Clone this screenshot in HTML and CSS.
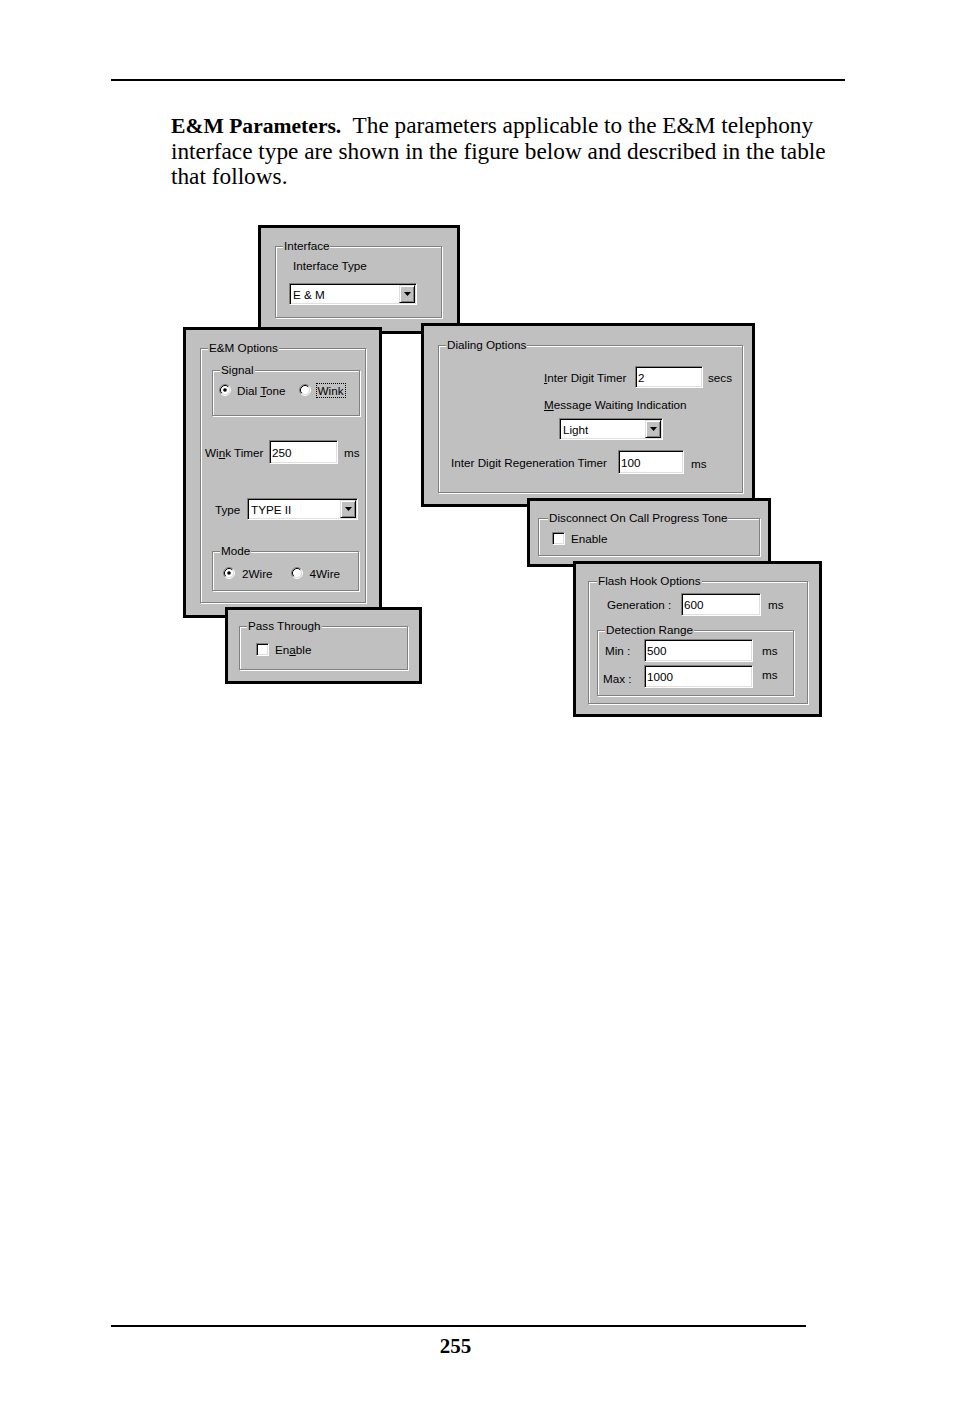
FILE: index.html
```html
<!DOCTYPE html>
<html lang="en">
<head>
<meta charset="utf-8">
<title>E&amp;M Parameters</title>
<link rel="stylesheet" href="styles.css">
</head>
<body>
<div class="page">
  <div class="rule rule-top"></div>
  <p class="intro"><b class="lead">E&amp;M Parameters.</b>&nbsp; The parameters applicable to the E&amp;M telephony interface type are shown in the figure below and described in the table that follows.</p>

  <div class="figure">
    <!-- Interface -->
    <section class="panel p-interface">
      <div class="group">
        <span class="legend">Interface</span>
        <div class="if-label">Interface Type</div>
        <div class="select if-select"><span class="sel-text">E &amp; M</span><span class="drop"><svg width="7" height="4" viewBox="0 0 7 4"><path d="M0 0H7L3.5 4Z" fill="#000"/></svg></span></div>
      </div>
    </section>

    <!-- E&M Options -->
    <section class="panel p-em">
      <div class="group">
        <span class="legend">E&amp;M Options</span>
        <div class="group sub g-signal">
          <span class="legend">Signal</span>
          <div class="opts sig-opts">
            <span class="opt"><svg class="radio" width="12" height="12" viewBox="0 0 12 12"><circle cx="6" cy="6" r="4.5" fill="#fff"/><path d="M2.11 9.89A5.5 5.5 0 0 1 9.89 2.11" fill="none" stroke="#808080"/><path d="M9.89 2.11A5.5 5.5 0 0 1 2.11 9.89" fill="none" stroke="#fff"/><path d="M2.82 9.18A4.5 4.5 0 0 1 9.18 2.82" fill="none" stroke="#000"/><path d="M9.18 2.82A4.5 4.5 0 0 1 2.82 9.18" fill="none" stroke="#dfdfdf"/><circle cx="6" cy="6" r="1.8" fill="#000"/></svg><span>Dial <u>T</u>one</span></span>
            <span class="opt opt-wink"><svg class="radio" width="12" height="12" viewBox="0 0 12 12"><circle cx="6" cy="6" r="4.5" fill="#fff"/><path d="M2.11 9.89A5.5 5.5 0 0 1 9.89 2.11" fill="none" stroke="#808080"/><path d="M9.89 2.11A5.5 5.5 0 0 1 2.11 9.89" fill="none" stroke="#fff"/><path d="M2.82 9.18A4.5 4.5 0 0 1 9.18 2.82" fill="none" stroke="#000"/><path d="M9.18 2.82A4.5 4.5 0 0 1 2.82 9.18" fill="none" stroke="#dfdfdf"/></svg><span class="focus">Wink</span></span>
          </div>
        </div>
        <div class="row wink-row">
          <span class="lbl lbl-wink">Wi<u>n</u>k Timer</span>
          <span class="field w-wink">250</span>
          <span class="unit">ms</span>
        </div>
        <div class="row type-row">
          <span class="lbl lbl-type">Type</span>
          <div class="select w-type"><span class="sel-text">TYPE II</span><span class="drop"><svg width="7" height="4" viewBox="0 0 7 4"><path d="M0 0H7L3.5 4Z" fill="#000"/></svg></span></div>
        </div>
        <div class="group sub g-mode">
          <span class="legend">Mode</span>
          <div class="opts mode-opts">
            <span class="opt"><svg class="radio" width="12" height="12" viewBox="0 0 12 12"><circle cx="6" cy="6" r="4.5" fill="#fff"/><path d="M2.11 9.89A5.5 5.5 0 0 1 9.89 2.11" fill="none" stroke="#808080"/><path d="M9.89 2.11A5.5 5.5 0 0 1 2.11 9.89" fill="none" stroke="#fff"/><path d="M2.82 9.18A4.5 4.5 0 0 1 9.18 2.82" fill="none" stroke="#000"/><path d="M9.18 2.82A4.5 4.5 0 0 1 2.82 9.18" fill="none" stroke="#dfdfdf"/><circle cx="6" cy="6" r="1.8" fill="#000"/></svg><span>2Wire</span></span>
            <span class="opt opt-4wire"><svg class="radio" width="12" height="12" viewBox="0 0 12 12"><circle cx="6" cy="6" r="4.5" fill="#fff"/><path d="M2.11 9.89A5.5 5.5 0 0 1 9.89 2.11" fill="none" stroke="#808080"/><path d="M9.89 2.11A5.5 5.5 0 0 1 2.11 9.89" fill="none" stroke="#fff"/><path d="M2.82 9.18A4.5 4.5 0 0 1 9.18 2.82" fill="none" stroke="#000"/><path d="M9.18 2.82A4.5 4.5 0 0 1 2.82 9.18" fill="none" stroke="#dfdfdf"/></svg><span>4Wire</span></span>
          </div>
        </div>
      </div>
    </section>

    <!-- Pass Through -->
    <section class="panel p-pass">
      <div class="group">
        <span class="legend">Pass Through</span>
        <div class="row chk-row pass-chk"><span class="check"></span><span>En<u>a</u>ble</span></div>
      </div>
    </section>

    <!-- Dialing Options -->
    <section class="panel p-dial">
      <div class="group">
        <span class="legend">Dialing Options</span>
        <div class="row d-row1">
          <span class="lbl lbl-idt"><u>I</u>nter Digit Timer</span>
          <span class="field w-idt">2</span>
          <span class="unit unit-secs">secs</span>
        </div>
        <div class="d-row2"><u>M</u>essage Waiting Indication</div>
        <div class="select d-row3"><span class="sel-text">Light</span><span class="drop"><svg width="7" height="4" viewBox="0 0 7 4"><path d="M0 0H7L3.5 4Z" fill="#000"/></svg></span></div>
        <div class="row d-row4">
          <span class="lbl lbl-regen">Inter Digit Regeneration Timer</span>
          <span class="field w-regen">100</span>
          <span class="unit unit-regen">ms</span>
        </div>
      </div>
    </section>

    <!-- Disconnect -->
    <section class="panel p-disc">
      <div class="group">
        <span class="legend legend-disc">Disconnect On Call Progress Tone</span>
        <div class="row chk-row disc-chk"><span class="check"></span><span>Enable</span></div>
      </div>
    </section>

    <!-- Flash Hook -->
    <section class="panel p-flash">
      <div class="group">
        <span class="legend legend-flash">Flash Hook Options</span>
        <div class="row f-gen">
          <span class="lbl lbl-gen">Generation :</span>
          <span class="field w-gen">600</span>
          <span class="unit unit-gen">ms</span>
        </div>
        <div class="group sub g-detect">
          <span class="legend">Detection Range</span>
          <div class="row f-min">
            <span class="lbl lbl-min">Min :</span>
            <span class="field w-range">500</span>
            <span class="unit unit-range">ms</span>
          </div>
          <div class="row f-max">
            <span class="lbl lbl-max">Max :</span>
            <span class="field w-range">1000</span>
            <span class="unit unit-range unit-up">ms</span>
          </div>
        </div>
      </div>
    </section>
  </div>

  <footer class="footer">
    <div class="rule rule-bottom"></div>
    <div class="page-num">255</div>
  </footer>
</div>
</body>
</html>
```
FILE: styles.css
```css
* { box-sizing: border-box; }

body {
  margin: 0;
  background: #fff;
  color: #000;
  font-family: "Liberation Sans", Arial, sans-serif;
}

.page {
  width: 954px;
  height: 1409px;
  display: flex;
  flex-direction: column;
  overflow: hidden;
}

.rule { height: 2px; background: #000; }
.rule-top { margin: 79px 0 0 111px; width: 734px; }

.intro {
  margin: 32px 0 0 171px;
  width: 665px;
  height: 76.5px;
  font-family: "Liberation Serif", "Times New Roman", serif;
  font-size: 23.3px;
  line-height: 25.5px;
  flex: none;
}
.lead { font-size: 21.6px; line-height: 18px; }

.figure {
  position: relative;
  height: 500px;
  margin-top: 30.5px;
  font-size: 11.7px;
  line-height: 13px;
  flex: none;
}

.footer { margin-top: auto; padding-bottom: 51px; }
.rule-bottom { margin-left: 111px; width: 695px; }
.page-num {
  margin: 7px 0 0 111px;
  width: 689px;
  text-align: center;
  font: bold 21px/24px "Liberation Serif", "Times New Roman", serif;
}

/* dialog panels on the figure canvas */
.panel {
  position: absolute;
  display: flex;
  border: 3px solid #000;
  background: #c0c0c0;
}
.p-interface { left: 258px; top: 5px;   width: 202px; height: 109px; padding: 18px 15px 13px 14px; z-index: 1; }
.p-em        { left: 183px; top: 107px; width: 199px; height: 291px; padding: 18px 13px 12px 14px; z-index: 2; }
.p-dial      { left: 421px; top: 103px; width: 334px; height: 184px; padding: 19px 9px 11px 14px;  z-index: 2; }
.p-pass      { left: 225px; top: 387px; width: 197px; height: 77px;  padding: 16px 11px 11px 11px; z-index: 3; }
.p-disc      { left: 527px; top: 278px; width: 244px; height: 69px;  padding: 17px 8px 8px 8px;    z-index: 3; }
.p-flash     { left: 573px; top: 341px; width: 249px; height: 156px; padding: 17px 11px 10px 12px; z-index: 4; }

/* etched group box */
.group {
  position: relative;
  flex: 1;
  border: 1px solid #808080;
  box-shadow: 1px 1px 0 #fff, inset 1px 1px 0 #fff;
}
.group.sub { flex: none; }
.legend {
  position: absolute;
  top: -8px;
  left: 7px;
  padding: 0 1px;
  background: #c0c0c0;
  white-space: nowrap;
}
.legend-disc { left: 9px; }
.legend-flash { left: 8px; }

/* controls */
.row { display: flex; align-items: center; }
.lbl { white-space: nowrap; }

.field {
  display: flex;
  align-items: center;
  background: #fff;
  border: 1px solid;
  border-color: #808080 #fff #fff #808080;
  box-shadow: inset 1px 1px 0 #000, inset -1px -1px 0 #dfdfdf;
  padding-left: 2px;
}

.select {
  display: flex;
  align-items: stretch;
  background: #fff;
  border: 1px solid;
  border-color: #808080 #fff #fff #808080;
  box-shadow: inset 1px 1px 0 #000, inset -1px -1px 0 #dfdfdf;
  padding: 1px;
}
.sel-text { flex: 1; display: flex; align-items: center; padding-left: 2px; }
.drop {
  width: 16px;
  display: flex;
  align-items: center;
  justify-content: center;
  background: #c0c0c0;
  border: 1px solid;
  border-color: #dfdfdf #000 #000 #dfdfdf;
  box-shadow: inset 1px 1px 0 #fff, inset -1px -1px 0 #808080;
}
.drop svg { display: block; }

.check {
  width: 13px;
  height: 13px;
  background: #fff;
  border: 1px solid;
  border-color: #808080 #fff #fff #808080;
  box-shadow: inset 1px 1px 0 #000, inset -1px -1px 0 #dfdfdf;
  margin-right: 6px;
}

.opts { display: flex; align-items: center; height: 12px; }
.opt { display: flex; align-items: center; gap: 6px; white-space: nowrap; }
.radio { display: block; flex: none; }
.focus { outline: 1px dotted #000; outline-offset: 0; padding: 0 1px; }

/* Interface */
.if-label { margin: 12px 0 0 17px; }
.if-select { margin: 11px 0 0 13px; width: 128px; height: 22px; }

/* E&M Options */
.g-signal { margin: 21px 0 0 11px; width: 148px; height: 46px; }
.sig-opts { margin: 13px 0 0 6px; }
.opt-wink { margin-left: 13px; }
.wink-row { margin: 24px 0 0 4px; height: 24px; }
.lbl-wink { width: 64px; }
.w-wink { width: 69px; height: 24px; }
.wink-row .unit { margin-left: 6px; }
.type-row { margin: 34px 0 0 14px; height: 22px; }
.lbl-type { width: 32px; }
.w-type { width: 111px; height: 22px; }
.g-mode { margin: 31px 0 0 11px; width: 147px; height: 40px; }
.mode-opts { margin: 15px 0 0 10px; }
.mode-opts .opt { gap: 7px; }
.opt-4wire { margin-left: 18px; }

/* Pass Through / Disconnect */
.pass-chk { margin: 16px 0 0 16px; }
.disc-chk { margin: 13px 0 0 13px; }

/* Dialing Options */
.d-row1 { margin: 20px 0 0 105px; height: 22px; }
.lbl-idt { width: 91px; }
.w-idt { width: 68px; height: 22px; }
.unit-secs { margin-left: 5px; }
.d-row2 { margin: 10px 0 0 105px; white-space: nowrap; }
.d-row3 { margin: 7px 0 0 120px; width: 104px; height: 22px; }
.d-row4 { margin: 10px 0 0 12px; height: 24px; }
.lbl-regen { width: 167px; }
.w-regen { width: 66px; height: 24px; }
.unit-regen { margin: 3px 0 0 7px; }

/* Flash Hook */
.f-gen { margin: 11px 0 0 18px; height: 23px; }
.lbl-gen { width: 74px; }
.w-gen { width: 80px; height: 23px; }
.unit-gen { margin-left: 7px; }
.g-detect { margin: 14px 0 0 8px; width: 197px; height: 66px; }
.f-min { margin: 8px 0 0 7px; height: 23px; }
.f-max { margin: 3px 0 0 5px; height: 23px; }
.lbl-min { width: 39px; }
.lbl-max { width: 41px; padding-top: 4px; }
.w-range { width: 109px; height: 23px; }
.unit-range { margin-left: 9px; }
.unit-up { margin-top: -4px; }
```
